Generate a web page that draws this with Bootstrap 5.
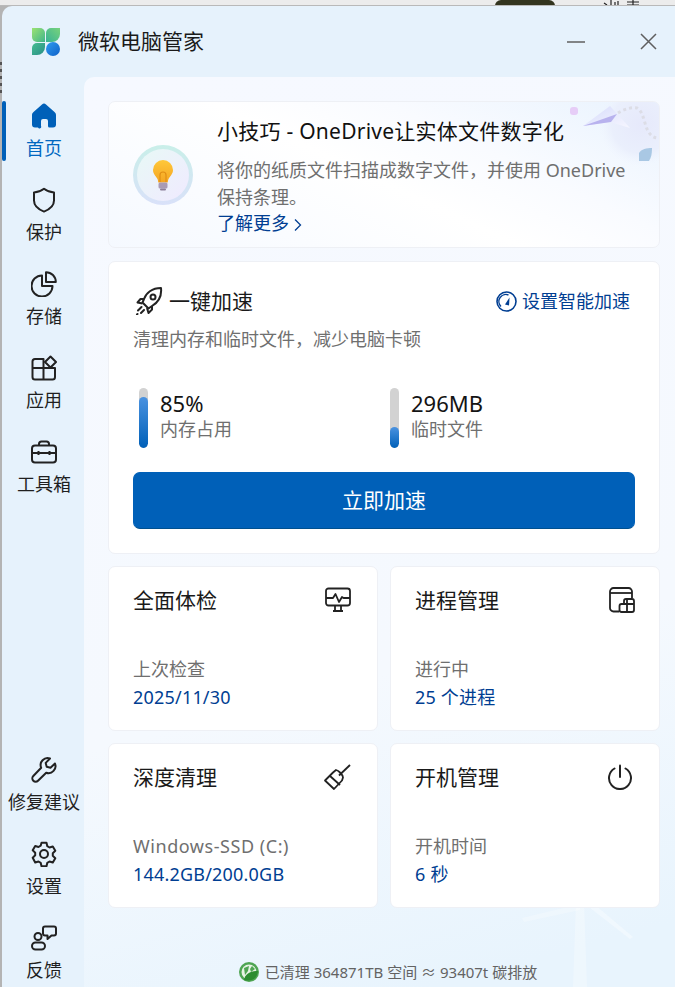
<!DOCTYPE html>
<html lang="zh-CN">
<head>
  <meta charset="UTF-8">
  <title>微软电脑管家</title>
  <link rel="stylesheet" href="https://cdn.jsdelivr.net/npm/bootstrap@5.3.3/dist/css/bootstrap.min.css">
  <style>
    html, body { height: 987px; overflow: hidden; }
    body {
      background: repeating-linear-gradient(180deg, #555 0 3px, #b4b4b4 3px 7px) 0 62px / 2px 32px no-repeat, #b4b4b4;
      font-family: "Noto Sans", "Noto Sans CJK SC", sans-serif;
      color: #1a1a1a;
      padding: 0 0 0 2px;
    }
    .desk-strip { height: 6px; margin-left: -2px; background: #ececec; overflow: hidden; position: relative; border-bottom: 1px solid #b9b9b9; }
    .desk-photo { position: absolute; left: 495px; top: 0; width: 60px; height: 6px; background: #33351f; border-radius: 14px 14px 0 0; }
    .desk-marks { position: absolute; left: 603px; top: 0; }
    .app-win { height: 1003px; background: #e6f2fc; border-top-left-radius: 10px; overflow: hidden; }
    .title-row { height: 71px; padding-left: 29px; }
    .app-name { font-size: 21px; margin-left: 17px; line-height: 1; }
    .win-btns { padding-right: 18px; gap: 55px; }
    .side-nav { width: 82px; flex: none; padding: 26px 0 0 2px; position: relative; }
    .side-item { height: 84px; font-size: 18px; line-height: 24px; color: #1f1f1f; }
    .side-item svg { margin-bottom: 7px; }
    .side-item.on { color: #0067c0; }
    .side-mark { position: absolute; left: 0; top: 24px; width: 4px; height: 60px; background: #0060b8; border-radius: 2px; }
    .main-panel {
      flex: 1; position: relative; overflow: hidden;
      background: linear-gradient(165deg, #f6f9ff 0%, #f5f9fe 62%, #e8f4fd 92%);
      border-top-left-radius: 10px;
      padding: 24px 15px 0 24px;
    }
    .turbine { position: absolute; left: 396px; top: 823px; }
    .panel-card { background: #fff; border: 1px solid #eef0f5; border-radius: 7px; position: relative; }
    .tip-box {
      height: 147px; margin-bottom: 13px; padding-left: 24px; overflow: hidden;
      background: linear-gradient(205deg, #e9f3fe 0%, #f9fbff 32%, #fff 52%, #f5f9ff 100%);
    }
    .tip-deco { position: absolute; right: 0; top: 0; }
    .tip-text { margin-left: 24px; padding: 2px 24px 0 0; position: relative; }
    .tip-head { font-size: 21px; line-height: 28px; margin-bottom: 12px; color: #111; letter-spacing: .25px; }
    .tip-desc { font-size: 18px; line-height: 27px; color: #6f6f6f; }
    .tip-link { font-size: 18px; line-height: 24px; color: #003e92; text-decoration: none; display: block; }
    .boost-box { height: 293px; margin-bottom: 12px; padding: 24px; }
    .boost-head { margin-left: 2px; gap: 6px; }
    .head-big { font-size: 21px; line-height: 30px; color: #1a1a1a; }
    .smart-link { font-size: 18px; line-height: 30px; color: #003e92; text-decoration: none; margin-right: 5px; gap: 5px; }
    .sub-gray { font-size: 18px; line-height: 26px; color: #6f6f6f; }
    .wide-latin { letter-spacing: .55px; }
    .boost-sub { margin-top: 10px; }
    .gauge-row { margin-top: 36px; margin-bottom: 24px; }
    .gauge-cell { flex: none; width: 257px; padding-left: 6px; }
    .gauge-cell.second { width: 245px; padding-left: 0; }
    .gauge-bar { width: 9px; height: 60px; border-radius: 5px; background: #d2d2d2; overflow: hidden; margin-right: 12px; }
    .gauge-fill { border-radius: 5px; background: linear-gradient(180deg, #4a92e0 0%, #0060b8 100%); }
    .gauge-num { font-size: 22px; line-height: 30px; color: #141414; }
    .gauge-lab { font-size: 18px; line-height: 23px; color: #6f6f6f; }
    .boost-btn { height: 57px; background: #0060b8; border-color: #0060b8; border-bottom-color: #00508f; color: #fff; font-size: 21px; border-radius: 7px; }
    .boost-btn:hover { background: #0060b8; color: #fff; }
    .tool-grid { grid-template-columns: 270px 270px; gap: 12px; }
    .tool-box { height: 165px; padding: 18px 24px 0; }
    .tool-ic { margin-right: 2px; }
    .tool-foot { margin-top: 41px; }
    .val-blue { font-size: 18px; line-height: 31px; color: #003e92; letter-spacing: .2px; }
    .green-line { position: absolute; left: 0; right: 0; top: 884px; font-size: 15px; line-height: 22px; color: #636363; gap: 6px; padding-left: 17px; }
  </style>
</head>
<body>
<div class="desk-strip">
  <div class="desk-photo"></div>
  <svg class="desk-marks" width="40" height="6" viewBox="0 0 40 6" fill="none" stroke="#222" stroke-width="1.200"><path d="M1 3l3 2M8 0v5M12 2v3M15 1v4M24 2h12M24 5h12M30 0v5"/></svg>
</div>

<div class="app-win d-flex flex-column">
  <div class="title-row d-flex align-items-center flex-none">
    <svg width="30" height="30" viewBox="0 0 30 30">
      <defs>
        <linearGradient id="lg1" x1="0" y1="0" x2="1" y2="1"><stop offset="0" stop-color="#9ce272"/><stop offset="1" stop-color="#3fb58c"/></linearGradient>
        <linearGradient id="lg2" x1="0" y1="0" x2="1" y2="1"><stop offset="0" stop-color="#45bd92"/><stop offset="1" stop-color="#2a8f86"/></linearGradient>
        <linearGradient id="lg3" x1="1" y1="0" x2="0" y2="1"><stop offset="0" stop-color="#78d27c"/><stop offset="1" stop-color="#38b394"/></linearGradient>
        <linearGradient id="lg4" x1="0" y1="0" x2="1" y2="1"><stop offset="0" stop-color="#2f9bf0"/><stop offset="1" stop-color="#0f62c8"/></linearGradient>
      </defs>
      <path d="M1 1h8a5 5 0 0 1 5 5v9H6a5 5 0 0 1-5-5z" fill="url(#lg1)"/>
      <path d="M15 15V6a5 5 0 0 1 5-5h9v6a8 8 0 0 1-8 8z" fill="url(#lg3)"/>
      <path d="M1 21a5 5 0 0 1 5-5h8v4a8 8 0 0 1-8 8H1z" fill="url(#lg2)"/>
      <circle cx="22" cy="22" r="7" fill="url(#lg4)"/>
    </svg>
    <span class="app-name">微软电脑管家</span>
    <div class="win-btns d-flex align-items-center ms-auto">
      <svg width="18" height="18" viewBox="0 0 18 18"><path d="M0 9h18" stroke="#5f5f5f" stroke-width="1.500"/></svg>
      <svg width="17" height="17" viewBox="0 0 17 17"><path d="M1 1l15 15M16 1L1 16" stroke="#5f5f5f" stroke-width="1.500"/></svg>
    </div>
  </div>

  <div class="d-flex flex-grow-1">
    <nav class="side-nav d-flex flex-column">
      <div class="side-mark"></div>
      <div class="side-item on d-flex flex-column align-items-center">
        <svg width="26" height="26" viewBox="0 0 26 26"><path d="M11 1.500a3 3 0 0 1 4 0l8.500 7.500c.9.800 1.500 1.800 1.500 3v9.500a3 3 0 0 1-3 3h-3.500a1.500 1.500 0 0 1-1.500-1.500v-5a2 2 0 0 0-2-2h-3a2 2 0 0 0-2 2v5A1.500 1.500 0 0 1 7 24.500H4a3 3 0 0 1-3-3V12c0-1.200.6-2.200 1.500-3z" fill="#0060b8"/></svg>
        首页
      </div>
      <div class="side-item d-flex flex-column align-items-center">
        <svg width="26" height="26" viewBox="0 0 26 26" fill="none" stroke="#222" stroke-width="2"><path d="M13 1.800c3 2.400 6 3.500 10 3.800v8c0 5-3.600 8.600-10 11-6.400-2.400-10-6-10-11v-8c4-.3 7-1.400 10-3.800z" stroke-linejoin="round"/></svg>
        保护
      </div>
      <div class="side-item d-flex flex-column align-items-center">
        <svg width="26" height="26" viewBox="0 0 26 26" fill="none" stroke="#222" stroke-width="2" stroke-linejoin="round"><path d="M11 4.500a10.500 10.500 0 1 0 10.500 10.500H11z"/><path d="M15 1.200a9.800 9.800 0 0 1 9.800 9.800H15z"/></svg>
        存储
      </div>
      <div class="side-item d-flex flex-column align-items-center">
        <svg width="26" height="26" viewBox="0 0 26 26" fill="none" stroke="#222" stroke-width="2" stroke-linejoin="round"><path d="M12.500 13V4H4a2.500 2.500 0 0 0-2.500 2.500V13zM1.500 13h11v11.500H4A2.500 2.500 0 0 1 1.500 22zM12.500 13h11.500v9a2.500 2.500 0 0 1-2.500 2.500h-9z"/><path d="M19.500 1.500L25 7l-5.500 5.500L14 7z" fill="#e6f2fc"/></svg>
        应用
      </div>
      <div class="side-item d-flex flex-column align-items-center">
        <svg width="26" height="26" viewBox="0 0 26 26" fill="none" stroke="#222" stroke-width="2"><rect x="1" y="6.500" width="24" height="17" rx="3"/><path d="M8 6.500V5a2.500 2.500 0 0 1 2.500-2.500h5A2.500 2.500 0 0 1 18 5v1.500M1 14h24M7.500 12v4M18.500 12v4"/></svg>
        工具箱
      </div>
      <div class="mt-auto"></div>
      <div class="side-item d-flex flex-column align-items-center">
        <svg width="26" height="26" viewBox="0 0 26 26" fill="none" stroke="#222" stroke-width="2" stroke-linejoin="round"><path d="M24 6.500l-4.500 4.200-3.800-1-1-3.800L19 1.500a7 7 0 0 0-8.800 9.300L2.300 19a3.300 3.300 0 0 0 4.700 4.700l8.200-8a7 7 0 0 0 8.800-9.200z"/></svg>
        修复建议
      </div>
      <div class="side-item d-flex flex-column align-items-center">
        <svg width="26" height="26" viewBox="0 0 26 26" fill="none" stroke="#222" stroke-width="2" stroke-linejoin="round"><path d="M10.500 1.800h5l.8 3.400 2.200 1.300 3.300-1 2.500 4.300-2.500 2.400v2.600l2.500 2.400-2.500 4.300-3.300-1-2.200 1.300-.8 3.400h-5l-.8-3.400-2.200-1.300-3.300 1L1.700 16.700 4.200 14.300v-2.600L1.700 9.300l2.500-4.300 3.300 1 2.200-1.300z"/><circle cx="13" cy="13" r="4"/></svg>
        设置
      </div>
      <div class="side-item d-flex flex-column align-items-center">
        <svg width="26" height="26" viewBox="0 0 26 26" fill="none" stroke="#222" stroke-width="2" stroke-linejoin="round"><circle cx="7" cy="11.500" r="3.500"/><rect x="1" y="17.500" width="13" height="7" rx="3.500"/><path d="M14 1.500h9a2 2 0 0 1 2 2v5a2 2 0 0 1-2 2h-2.500L16.500 14v-3.500H14a2 2 0 0 1-2-2v-5a2 2 0 0 1 2-2z"/></svg>
        反馈
      </div>
    </nav>

    <main class="main-panel">
      <svg class="turbine" width="195" height="87" viewBox="0 0 195 87" fill="#fff">
        <path d="M96 0h8l3 87H93z" fill-opacity=".28"/>
        <path d="M100 4L42 18l2 4 56-12z" fill-opacity=".25"/>
        <path d="M115 5l38 32-3 2-41-32z" fill-opacity=".35"/>
      </svg>

      <section class="panel-card tip-box d-flex align-items-center">
        <svg class="tip-deco" width="130" height="80" viewBox="0 0 130 80">
          <defs>
            <linearGradient id="pl" x1="0" y1="0" x2="1" y2="1"><stop offset="0" stop-color="#d6dcfb"/><stop offset="1" stop-color="#f6f6ff"/></linearGradient>
            <radialGradient id="blob"><stop offset="0" stop-color="#e6e9fb"/><stop offset=".7" stop-color="#eaeffc"/><stop offset="1" stop-color="#eff4fe" stop-opacity="0"/></radialGradient>
          </defs>
          <circle cx="112" cy="22" r="42" fill="url(#blob)"/>
          <rect x="41" y="5" width="8" height="8" rx="3" fill="#e6cdf7"/>
          <path d="M54 24L81 4l20 22-20-6z" fill="url(#pl)"/>
          <path d="M54 24l34-12-6 8z" fill="#b8b2ee"/>
          <path d="M89 11c6-4 14-6 19-5 5 3 6 9 8 15 2 8 6 15 13 15" fill="none" stroke="#dcdde6" stroke-width="3" stroke-dasharray="3 3"/>
          <path d="M110 51c2-4 8-5 13-5 0 6-1 10-3 13h-10z" fill="#a9c8e4"/>
        </svg>
        <svg width="60" height="60" viewBox="0 0 60 60" class="flex-shrink-0">
          <defs>
            <linearGradient id="ring" x1="0" y1="0" x2="0" y2="1"><stop offset="0" stop-color="#c9efe9"/><stop offset="1" stop-color="#d9e1f9"/></linearGradient>
            <linearGradient id="dsk" x1="0" y1="0" x2="1" y2="1"><stop offset="0" stop-color="#e8f9f6"/><stop offset="1" stop-color="#f0eaff"/></linearGradient>
            <linearGradient id="bulb" x1="0" y1="0" x2="0" y2="1"><stop offset="0" stop-color="#ffc83a"/><stop offset="1" stop-color="#f4a522"/></linearGradient>
          </defs>
          <circle cx="30" cy="30" r="30" fill="url(#ring)"/>
          <circle cx="30" cy="30" r="26" fill="url(#dsk)"/>
          <path d="M30 15a10 10 0 0 0-10 10c0 4 3 6 4.500 9 .6 1.200.5 2.500.8 3.500h9.400c.3-1 .2-2.300.8-3.500 1.500-3 4.500-5 4.500-9a10 10 0 0 0-10-10z" fill="url(#bulb)"/>
          <path d="M27 37v-7a3 3 0 1 1 6 0v7" fill="none" stroke="#e08e14" stroke-width="1.200"/>
          <rect x="25.500" y="37.500" width="9" height="6" rx="1.500" fill="#a99bb5"/>
          <rect x="27" y="43.500" width="6" height="2" rx="1" fill="#8c7f99"/>
        </svg>
        <div class="tip-text">
          <div class="tip-head">小技巧 - OneDrive让实体文件数字化</div>
          <div class="tip-desc">将你的纸质文件扫描成数字文件，并使用 OneDrive 保持条理。</div>
          <a class="tip-link" href="#">了解更多
            <svg width="8" height="14" viewBox="0 0 8 14"><path d="M1 1.500L6.500 7 1 12.500" fill="none" stroke="#003e92" stroke-width="1.300"/></svg>
          </a>
        </div>
      </section>

      <section class="panel-card boost-box">
        <div class="d-flex align-items-center justify-content-between">
          <div class="boost-head d-flex align-items-center">
            <svg width="28" height="28" viewBox="0 0 28 28" fill="none" stroke="#222" stroke-width="2" stroke-linejoin="round">
              <path d="M9 12C11 6 17 1 26 1c1 9-4 15-9 18l-3.500 2.500-6-6z"/>
              <circle cx="18" cy="10" r="2.500"/>
              <path d="M9 12H5.500L2.500 15.500l5 1M17 19v3.500L13.500 26l-1.500-5"/>
              <path d="M6.500 20L3 23.500M9 23L6 26M2.500 27l-.5.500" stroke-linecap="round"/>
            </svg>
            <span class="head-big">一键加速</span>
          </div>
          <a class="smart-link d-flex align-items-center" href="#">
            <svg width="21" height="21" viewBox="0 0 21 21" fill="none" stroke="#003e92"><circle cx="10.500" cy="10.500" r="9.500" stroke-width="1.600"/><path d="M5 15.500a7 7 0 0 1 7.500-11.500" stroke-width="1.400"/><path d="M9 13.500l4.500-7-.5 8z" fill="#003e92" stroke="none"/></svg>
            设置智能加速
          </a>
        </div>
        <div class="sub-gray boost-sub">清理内存和临时文件，减少电脑卡顿</div>
        <div class="gauge-row d-flex">
          <div class="gauge-cell d-flex">
            <div class="gauge-bar d-flex flex-column justify-content-end"><div class="gauge-fill" style="height:85%"></div></div>
            <div>
              <div class="gauge-num">85%</div>
              <div class="gauge-lab">内存占用</div>
            </div>
          </div>
          <div class="gauge-cell second d-flex">
            <div class="gauge-bar d-flex flex-column justify-content-end"><div class="gauge-fill" style="height:35%"></div></div>
            <div>
              <div class="gauge-num">296MB</div>
              <div class="gauge-lab">临时文件</div>
            </div>
          </div>
        </div>
        <button class="btn boost-btn w-100">立即加速</button>
      </section>

      <section class="d-grid tool-grid">
        <div class="panel-card tool-box">
          <div class="d-flex align-items-center justify-content-between">
            <span class="head-big">全面体检</span>
            <svg class="tool-ic" width="26" height="26" viewBox="0 0 26 26" fill="none" stroke="#222" stroke-width="1.800" stroke-linejoin="round"><path d="M1 13V4a2.500 2.500 0 0 1 2.500-2.500h19A2.500 2.500 0 0 1 25 4v9M1 13v3a2.500 2.500 0 0 0 2.500 2.500h19A2.500 2.500 0 0 0 25 16v-3"/><path d="M1 11h7l2.500-4 3.500 8 3-5 1.500 1H25M8 24h10M10 23.500v-5M16 23.500v-5"/></svg>
          </div>
          <div class="tool-foot">
            <div class="sub-gray">上次检查</div>
            <div class="val-blue">2025/11/30</div>
          </div>
        </div>
        <div class="panel-card tool-box">
          <div class="d-flex align-items-center justify-content-between">
            <span class="head-big">进程管理</span>
            <svg width="26" height="26" viewBox="0 0 26 26" fill="none" stroke="#222" stroke-width="1.800" stroke-linejoin="round"><path d="M10 24.500H4.500A3.500 3.500 0 0 1 1 21V4.500A3.500 3.500 0 0 1 4.500 1h15A3.500 3.500 0 0 1 23 4.500V11"/><path d="M1 6h22"/><path d="M10.500 19a2 2 0 0 1 2-2h2.500v-3a2 2 0 0 1 2-2h6a2 2 0 0 1 2 2v9a2 2 0 0 1-2 2H12.500a2 2 0 0 1-2-2z"/><path d="M15 17h10M18 12v13"/></svg>
          </div>
          <div class="tool-foot">
            <div class="sub-gray">进行中</div>
            <div class="val-blue">25 个进程</div>
          </div>
        </div>
        <div class="panel-card tool-box">
          <div class="d-flex align-items-center justify-content-between">
            <span class="head-big">深度清理</span>
            <svg class="tool-ic" width="27" height="27" viewBox="0 0 27 27" fill="none" stroke="#222" stroke-width="1.800" stroke-linejoin="round"><path d="M26 1L15 11.500"/><path d="M9 8.500l3-2.500c1 .3 2.500 1 4 2.500s3 4 3 5l-1 3-8 8.500-9-8.500z"/><path d="M6 12l10 9"/></svg>
          </div>
          <div class="tool-foot">
            <div class="sub-gray wide-latin">Windows-SSD (C:)</div>
            <div class="val-blue">144.2GB/200.0GB</div>
          </div>
        </div>
        <div class="panel-card tool-box">
          <div class="d-flex align-items-center justify-content-between">
            <span class="head-big">开机管理</span>
            <svg class="tool-ic" width="26" height="26" viewBox="0 0 26 26" fill="none" stroke="#222" stroke-width="2" stroke-linecap="round"><path d="M13 1.500V13"/><path d="M7.500 4.500a11 11 0 1 0 11 0"/></svg>
          </div>
          <div class="tool-foot">
            <div class="sub-gray">开机时间</div>
            <div class="val-blue">6 秒</div>
          </div>
        </div>
      </section>

      <div class="green-line d-flex align-items-center justify-content-center">
        <svg width="20" height="20" viewBox="0 0 20 20"><circle cx="10" cy="10" r="10" fill="#4fa553"/><circle cx="10" cy="10" r="7.500" fill="#e7f3e4"/><path d="M5 6l5-2-1 5-3 4zM13 4l3 3-4 3-1-3z" fill="#4fa553"/><path d="M5 18c1-6 7-9 14-9-1 7-5 11-14 9z" fill="#2c8c30"/></svg>
        已清理 364871TB 空间 ≈ 93407t 碳排放
      </div>
    </main>
  </div>
</div>
<script src="https://cdn.jsdelivr.net/npm/bootstrap@5.3.3/dist/js/bootstrap.bundle.min.js"></script>
</body>
</html>
